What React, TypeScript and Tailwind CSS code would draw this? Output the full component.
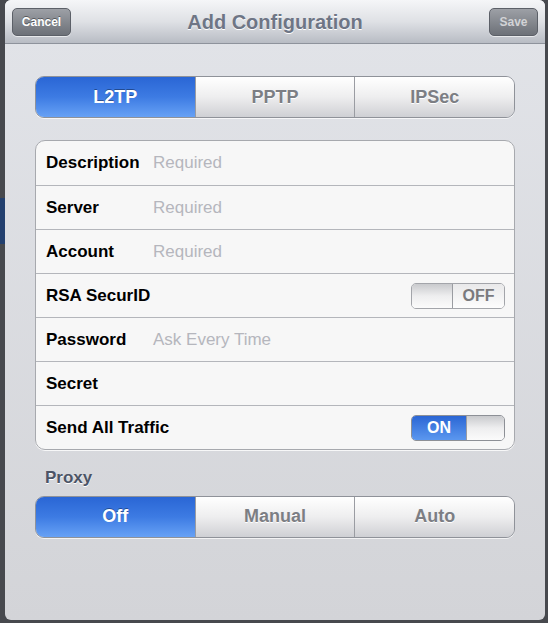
const FONT = 'font-["Liberation_Sans",Arial,sans-serif]';

const ROWS = [
  { label: 'Description', placeholder: 'Required' },
  { label: 'Server', placeholder: 'Required' },
  { label: 'Account', placeholder: 'Required' },
  { label: 'RSA SecurID', toggle: false },
  { label: 'Password', placeholder: 'Ask Every Time' },
  { label: 'Secret' },
  { label: 'Send All Traffic', toggle: true },
] as const;

function Segmented({ items, active }: { items: string[]; active: number }) {
  return (
    <div className="flex h-[42px] overflow-hidden rounded-[9px] border border-[#8f9299] shadow-[0_1px_0_rgba(255,255,255,0.7)]">
      {items.map((item, i) => (
        <div
          key={item}
          className={
            i === active
              ? 'flex flex-1 items-center justify-center bg-gradient-to-b from-[#2a66d5] via-[#3d7be3] to-[#67a1f5] text-[18px] font-bold text-white [text-shadow:0_-1px_0_rgba(0,0,0,0.35)]'
              : 'flex flex-1 items-center justify-center border-l border-[#9a9ca2] bg-gradient-to-b from-[#ffffff] via-[#eeeeef] to-[#cfd0d4] text-[18px] font-bold text-[#7c7e84] [text-shadow:0_1px_0_#fff] first:border-l-0'
          }
        >
          {item}
        </div>
      ))}
    </div>
  );
}

function Toggle({ on }: { on: boolean }) {
  if (on) {
    return (
      <div className="flex h-[26px] w-[94px] overflow-hidden rounded-[5px] border border-[#8d9096]">
        <div className="flex w-[54px] items-center justify-center bg-gradient-to-b from-[#2b66d4] to-[#5b97ef] text-[16px] font-bold text-white">
          ON
        </div>
        <div className="flex-1 border-l border-[#9a9ca1] bg-gradient-to-b from-[#c9cacd] via-[#eeeeef] to-[#fbfbfb]" />
      </div>
    );
  }
  return (
    <div className="flex h-[26px] w-[94px] overflow-hidden rounded-[5px] border border-[#a3a5aa]">
      <div className="w-[41px] border-r border-[#9a9ca1] bg-gradient-to-b from-[#c9cacd] via-[#eeeeef] to-[#fbfbfb]" />
      <div className="flex flex-1 items-center justify-center bg-gradient-to-b from-[#e9e9ea] to-[#fdfdfd] text-[16px] font-bold text-[#7a7a7d]">
        OFF
      </div>
    </div>
  );
}

export default function App() {
  return (
    <div className={`flex h-[623px] w-[548px] bg-[#47494e] pb-[3px] ${FONT}`}>
      <div className="flex w-[5px] flex-col">
        <div className="h-[198px]" />
        <div className="h-[46px] bg-[#23406f]" />
      </div>

      <div className="flex flex-1 flex-col overflow-hidden rounded-[6px] bg-gradient-to-b from-[#e2e4e9] to-[#d3d4d8]">
        <header className="relative flex h-[44px] items-center justify-between border-b border-[#8e939c] bg-gradient-to-b from-[#f5f6f8] via-[#dfe1e5] to-[#b8bcc4] px-[7px]">
          <button className="h-[28px] w-[59px] rounded-[5px] border border-[#5c6068] bg-gradient-to-b from-[#9da0a6] to-[#6d7178] text-[12px] font-bold text-white shadow-[0_1px_0_rgba(255,255,255,0.6)] [text-shadow:0_-1px_0_rgba(0,0,0,0.4)]">
            Cancel
          </button>
          <h1 className="pointer-events-none absolute left-0 right-0 text-center text-[20px] font-bold text-[#6e7585] [text-shadow:0_1px_0_#fff]">
            Add Configuration
          </h1>
          <button className="h-[28px] w-[49px] rounded-[5px] border border-[#5c6068] bg-gradient-to-b from-[#9da0a6] to-[#6d7178] text-[12px] font-bold text-[#d2d3d6] shadow-[0_1px_0_rgba(255,255,255,0.6)]">
            Save
          </button>
        </header>

        <div className="flex flex-col px-[30px] pt-[32px]">
          <Segmented items={['L2TP', 'PPTP', 'IPSec']} active={0} />

          <div className="mt-[22px] overflow-hidden rounded-[10px] border border-[#a7a9ae] bg-[#f7f7f7] shadow-[0_1px_0_rgba(255,255,255,0.8)]">
            {ROWS.map((row, i) => (
              <div
                key={row.label}
                className={`flex h-[44px] items-center pl-[10px] pr-[9px] ${i > 0 ? 'border-t border-[#b4b6bb]' : ''}`}
              >
                <span className="w-[107px] shrink-0 whitespace-nowrap text-[17px] font-bold text-black">
                  {row.label}
                </span>
                {'placeholder' in row && (
                  <span className="text-[17px] text-[#b5b6bd]">{row.placeholder}</span>
                )}
                {'toggle' in row && (
                  <div className="ml-auto">
                    <Toggle on={row.toggle} />
                  </div>
                )}
              </div>
            ))}
          </div>

          <div className="mt-[15px] pl-[10px] text-[17px] font-bold text-[#4c5466] [text-shadow:0_1px_0_#fff]">
            Proxy
          </div>
          <div className="mt-[5px]">
            <Segmented items={['Off', 'Manual', 'Auto']} active={0} />
          </div>
        </div>
      </div>

      <div className="w-[3px]" />
    </div>
  );
}
